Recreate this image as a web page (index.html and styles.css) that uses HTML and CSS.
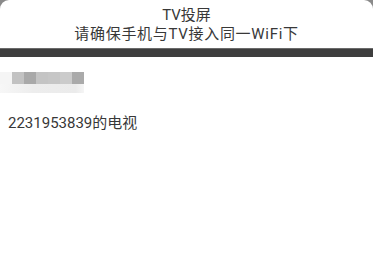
FILE: index.html
```html
<!DOCTYPE html>
<html lang="zh">
<head>
<meta charset="utf-8">
<link rel="stylesheet" href="styles.css">
</head>
<body>
<div class="dialog">
  <div class="header">
    <div class="title">TV投屏</div>
    <div class="subtitle">请确保手机与TV接入同一WiFi下</div>
  </div>
  <div class="bar"></div>
  <div class="content">
    <div class="blur">
      <div class="row top">
        <span class="px p0"></span><span class="px p1"></span><span class="px p2"></span><span class="px p3"></span><span class="px p4"></span><span class="px p5"></span><span class="px p6"></span>
      </div>
      <div class="row bottom"></div>
    </div>
    <div class="device">2231953839的电视</div>
  </div>
</div>
</body>
</html>
```
FILE: styles.css
```css
html, body {
  margin: 0;
  padding: 0;
  background: #8a8a8a;
  width: 373px;
  height: 266px;
  overflow: hidden;
}
.dialog {
  background: #ffffff;
  height: 266px;
  border-radius: 9px 9px 0 0;
  font-family: Roboto, "Noto Sans CJK SC", sans-serif;
  color: #383838;
}
.header {
  height: 48px;
  display: flex;
  flex-direction: column;
  align-items: center;
  padding-top: 6px;
  box-sizing: border-box;
}
.title {
  font-size: 15px;
  line-height: 18px;
}
.subtitle {
  font-size: 15px;
  line-height: 18px;
  letter-spacing: 0.7px;
  margin-top: 1px;
}
.bar {
  height: 9px;
  background: #3e3e3e;
  border-top: 1px solid #6a6a6a;
  box-sizing: border-box;
}
.content {
  padding-top: 15px;
}
.blur {
  display: flex;
  flex-direction: column;
}
.row {
  display: flex;
}
.row.top {
  height: 12px;
}
.row.bottom {
  height: 9px;
  width: 84px;
  background: linear-gradient(to right, #f7f7f7, #ededed 40%, #ebebeb 90%, #f5f5f5);
}
.px {
  width: 12px;
  height: 12px;
}
.p0 { background: #f5f5f5; }
.p1 { background: #c2c2c2; }
.p2 { background: #a9a9a9; }
.p3 { background: #c4c4c4; }
.p4 { background: #c6c6c6; }
.p5 { background: #cbcbcb; }
.p6 { background: #aaaaaa; }
.device {
  margin-top: 21px;
  padding-left: 8px;
  font-size: 15px;
  line-height: 18px;
}
```
